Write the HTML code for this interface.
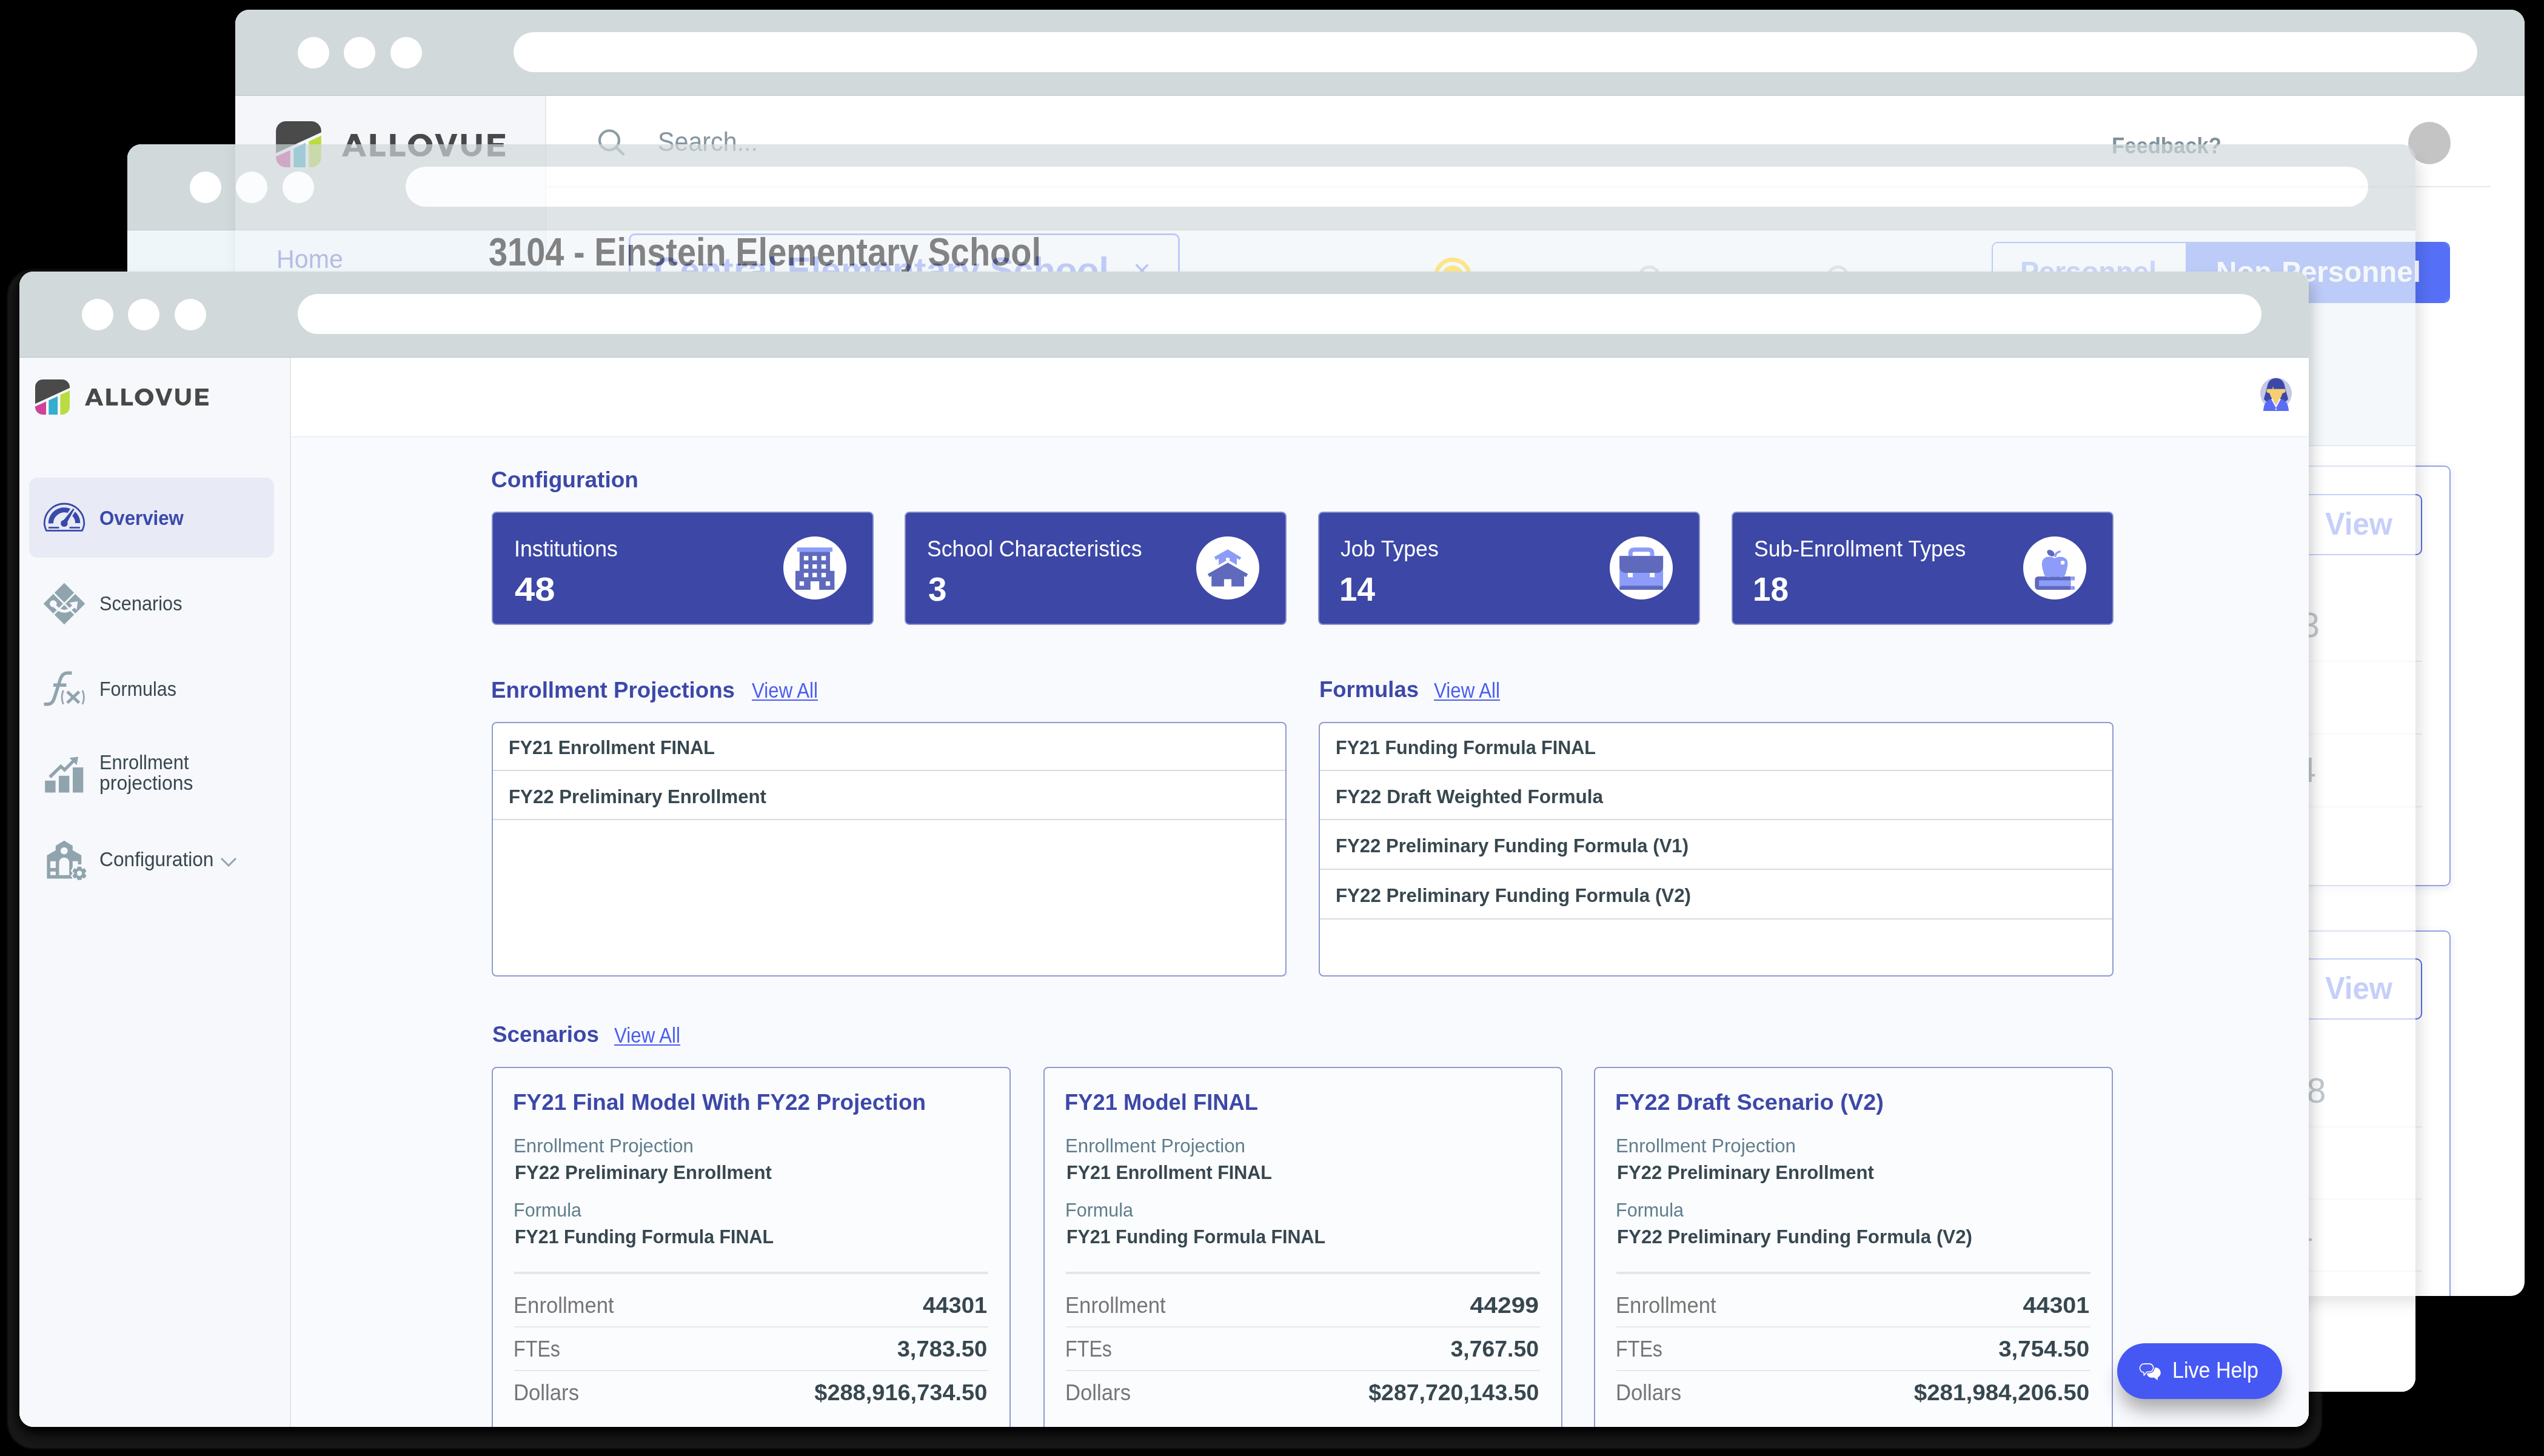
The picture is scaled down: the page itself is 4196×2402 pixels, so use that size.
<!DOCTYPE html><html><head><meta charset="utf-8"><style>
*{margin:0;padding:0;box-sizing:border-box}
html,body{width:4196px;height:2402px;overflow:hidden;background:#000}
body{position:relative;font-family:"Liberation Sans",sans-serif}
.a{position:absolute}
.t{position:absolute;line-height:1;white-space:nowrap}
.win{position:absolute;border-radius:23px;overflow:hidden}
.tb{background:#d1d9db;border-bottom:1px solid #bcc4c8}
.dot{width:52px;height:52px;border-radius:50%;background:#fff}
.url{height:66px;border-radius:33px;background:#fff}
</style></head><body><div class="a" style="left:12px;top:444px;width:3818px;height:1946px;border-radius:44px;background:#181818;filter:blur(1.5px)"></div><div class="a" style="left:30px;top:452px;width:3782px;height:1912px;border-radius:30px;background:#000;filter:blur(9px)"></div><div class="win" style="left:210px;top:238px;width:3774px;height:2058px;background:#fff"><div class="a tb" style="left:0;top:0;width:3774px;height:142px"></div><div class="a dot" style="left:103px;top:44.5px"></div><div class="a dot" style="left:179px;top:44.5px"></div><div class="a dot" style="left:256px;top:44.5px"></div><div class="a url" style="left:459px;top:37px;width:3237px"></div><div class="a" style="left:0.0px;top:142.0px;width:3774.0px;height:355.5px;background:#eff6f9;border-bottom:2px solid #d4e2f2"></div><div class="a" style="left:0.0px;top:497.5px;width:3774.0px;height:1560.5px;background:#fff"></div></div><div class="win" style="left:388px;top:16px;width:3776px;height:2122px;background:#fff;box-shadow:6px 12px 22px rgba(0,0,0,.3)"><div class="a tb" style="left:0;top:0;width:3776px;height:142px"></div><div class="a dot" style="left:103px;top:44.5px"></div><div class="a dot" style="left:179px;top:44.5px"></div><div class="a dot" style="left:256px;top:44.5px"></div><div class="a url" style="left:459px;top:37px;width:3239px"></div><div class="a" style="left:0.0px;top:142.0px;width:513.0px;height:2122.0px;background:#f4f6f9;border-right:2px solid #e6e9ed"></div><div class="a" style="left:513.0px;top:291.0px;width:3207.0px;height:2.0px;background:#e6e9ec"></div><svg class="a" style="left:67.0px;top:184.0px;" width="75" height="76" viewBox="0 0 57 58"><defs><clipPath id="lcb"><rect x="0" y="0" width="57" height="58" rx="12.5"/></clipPath></defs><g clip-path="url(#lcb)"><polygon points="-1,-1 58,-1 58,13.6 -1,40.6" fill="#4a4a4a"/><polygon points="-1,44.9 18,36.4 18,59 -1,59" fill="#d04399"/><polygon points="22.3,34.4 37.1,27.7 37.1,59 22.3,59" fill="#35adcc"/><polygon points="41.4,25.3 58,17.8 58,59 41.4,59" fill="#b9dc42"/></g></svg><svg class="a" style="left:176.0px;top:204.5px;" width="269" height="37.1" viewBox="0 0 203.9 28.1"><path fill="#484848" fill-rule="evenodd" d="M0,28.1 L11.3,0 L19,0 L30.3,28.1 L23.3,28.1 L21.1,22.2 L9.2,22.2 L7,28.1 Z M10.9,17.2 L19.2,17.2 L15,7.3 Z M35.3,0 L42.4,0 L42.4,22.2 L54.3,22.2 L54.3,28.1 L35.3,28.1 Z M60.2,0 L67,0 L67,22.2 L79.2,22.2 L79.2,28.1 L60.2,28.1 Z M82.5,14 A15.3,14.3 0 1 0 113.1,14 A15.3,14.3 0 1 0 82.5,14 Z M89.9,14 A7.9,8.5 0 1 1 105.7,14 A7.9,8.5 0 1 1 89.9,14 Z M116.2,0 L123,0 L130.4,20.4 L137.5,0 L144.3,0 L134,28.1 L126.5,28.1 Z M149.2,0 H155.8 V16.2 A6,6.5 0 0 0 167.8,16.2 V0 H174.6 V16.2 A12.7,11.9 0 0 1 149.2,16.2 Z M182.2,0 L203.9,0 L203.9,5.5 L189,5.5 L189,11.4 L202.1,11.4 L202.1,16.3 L189,16.3 L189,22.2 L203.9,22.2 L203.9,28.1 L182.2,28.1 Z"/></svg><svg class="a" style="left:598.0px;top:197.0px;" width="48" height="48" viewBox="0 0 48 48"><circle cx="19" cy="18.5" r="16" fill="none" stroke="#8d9ca4" stroke-width="4.2"/><path d="M30.5,30 L42,41.5" stroke="#8d9ca4" stroke-width="4.5" stroke-linecap="round"/></svg><div class="t" style="left:697.0px;top:195.8px;font-size:44.6px;color:#8596a0;font-weight:400;transform-origin:0 50%;transform:scaleX(0.9245);">Search...</div><div class="t" style="left:3095.0px;top:205.7px;font-size:37px;color:#7f919a;font-weight:700;transform-origin:0 50%;transform:scaleX(0.9364);">Feedback?</div><div class="a" style="left:3584.0px;top:185.0px;width:70.0px;height:70.0px;background:#c4c4c4;border-radius:50%"></div><div class="t" style="left:68.0px;top:391.4px;font-size:42px;color:#3f45b5;font-weight:400;transform-origin:0 50%;transform:scaleX(0.9817);">Home</div><div class="a" style="left:649.0px;top:369.0px;width:909.0px;height:140.0px;border:3px solid #5a70f5;border-radius:10px"></div><div class="t" style="left:691.0px;top:399.9px;font-size:58px;color:#5a70f0;font-weight:700;transform-origin:0 50%;transform:scaleX(1.0161);">Central Elementary School</div><div class="t" style="left:1481.0px;top:404.7px;font-size:50px;color:#4a63f0;font-weight:400;transform-origin:0 50%;">×</div><div class="a" style="left:2897.0px;top:383.0px;width:756.0px;height:101.0px;border:2px solid #5570f7;border-radius:10px;overflow:hidden"><div class="a" style="left:318.0px;top:0.0px;width:438.0px;height:101.0px;background:#5570f7"></div></div><div class="t" style="left:2944.0px;top:408.9px;font-size:48px;color:#7d90f7;font-weight:700;transform-origin:0 50%;transform:scaleX(0.9695);">Personnel</div><div class="t" style="left:3266.6px;top:408.9px;font-size:48px;color:#fff;font-weight:700;transform-origin:0 50%;transform:scaleX(0.9901);">Non-Personnel</div><div class="a" style="left:2912.0px;top:752.0px;width:741.5px;height:694.0px;border:2px solid #95a2e2;border-radius:10px;box-shadow:0 4px 14px rgba(60,70,120,.12)"></div><div class="a" style="left:3312.0px;top:799.0px;width:295.0px;height:101.0px;border:2px solid #4f6af0;border-radius:10px"></div><div class="t" style="left:3447.0px;top:821.5px;font-size:52px;color:#4f6af0;font-weight:700;transform-origin:0 50%;transform:scaleX(0.9442);">View</div><div class="a" style="left:2912.0px;top:1519.0px;width:741.5px;height:865.0px;border:2px solid #95a2e2;border-radius:10px;box-shadow:0 4px 14px rgba(60,70,120,.12)"></div><div class="a" style="left:3312.0px;top:1565.0px;width:295.0px;height:101.0px;border:2px solid #4f6af0;border-radius:10px"></div><div class="t" style="left:3447.0px;top:1587.5px;font-size:52px;color:#4f6af0;font-weight:700;transform-origin:0 50%;transform:scaleX(0.9442);">View</div><div class="a" style="left:2942.0px;top:1074.0px;width:665.0px;height:2.0px;background:#eceef1"></div><div class="a" style="left:2942.0px;top:1194.0px;width:665.0px;height:2.0px;background:#eceef1"></div><div class="a" style="left:2942.0px;top:1314.0px;width:665.0px;height:2.0px;background:#eceef1"></div><div class="a" style="left:2942.0px;top:1842.0px;width:665.0px;height:2.0px;background:#eceef1"></div><div class="a" style="left:2942.0px;top:1961.0px;width:665.0px;height:2.0px;background:#eceef1"></div><div class="a" style="left:2942.0px;top:2080.0px;width:665.0px;height:2.0px;background:#eceef1"></div></div><div class="win" style="left:210px;top:238px;width:3774px;height:2058px;opacity:0.68;box-shadow:10px 22px 22px rgba(0,0,0,.16)"><div class="a tb" style="left:0;top:0;width:3774px;height:142px"></div><div class="a dot" style="left:103px;top:44.5px"></div><div class="a dot" style="left:179px;top:44.5px"></div><div class="a dot" style="left:256px;top:44.5px"></div><div class="a url" style="left:459px;top:37px;width:3237px"></div><div class="a" style="left:0.0px;top:142.0px;width:3774.0px;height:355.5px;background:#eff6f9;border-bottom:2px solid #d4e2f2"></div><div class="a" style="left:0.0px;top:497.5px;width:3774.0px;height:1560.5px;background:#fff"></div><div class="t" style="left:596.0px;top:145.8px;font-size:64px;color:#4a4a4a;font-weight:700;transform-origin:0 50%;transform:scaleX(0.8741);">3104 - Einstein Elementary School</div><div class="a" style="left:2155.4px;top:187.4px;width:61.2px;height:61.2px;border:7px solid #fcda53;border-radius:50%;background:radial-gradient(circle,#fcda53 17.5px,transparent 18.5px)"></div><div class="a" style="left:2491.5px;top:199.8px;width:37.0px;height:37.0px;border:5px solid #d6d6d6;border-radius:50%"></div><div class="a" style="left:2803.0px;top:199.8px;width:37.0px;height:37.0px;border:5px solid #d6d6d6;border-radius:50%"></div><div class="t" style="right:158.0px;top:765.4px;font-size:57px;color:#a2afb6;font-weight:400;transform-origin:100% 50%;">3</div><div class="t" style="right:164.0px;top:1003.7px;font-size:57px;color:#a2afb6;font-weight:400;transform-origin:100% 50%;">4</div><div class="t" style="right:147.5px;top:1533.0px;font-size:57px;color:#a2afb6;font-weight:400;transform-origin:100% 50%;">8</div><div class="a" style="left:3596.0px;top:1805.0px;width:7.0px;height:4.0px;background:#a2afb6"></div></div><div class="win" style="left:32px;top:448px;width:3776px;height:1906px;background:#f9fafd;box-shadow:8px 12px 20px rgba(0,0,0,.17)"><div class="a tb" style="left:0;top:0;width:3776px;height:142px"></div><div class="a dot" style="left:103px;top:44.5px"></div><div class="a dot" style="left:179px;top:44.5px"></div><div class="a dot" style="left:256px;top:44.5px"></div><div class="a url" style="left:459px;top:37px;width:3239px"></div><div class="a" style="left:0.0px;top:142.0px;width:448.0px;height:1906.0px;background:#f7f8fb;border-right:2px solid #e3e6ea"></div><div class="a" style="left:448.0px;top:142.0px;width:3776.0px;height:132.0px;background:#fff;border-bottom:2px solid #e4e6ee"></div><div class="a" style="left:448.0px;top:273.0px;width:3776.0px;height:1906.0px;background:#f9fafd"></div><svg class="a" style="left:3668.0px;top:152.0px;" width="110" height="100" viewBox="0 0 110 100"><circle cx="54" cy="49" r="26" fill="#c5c9e6"/><path d="M39,40 Q41,24 54,24 Q67,24 69,40 L74,58 Q72,62 66,64 L42,64 Q36,62 34,58 Z" fill="#3c48a8"/><path d="M40,41.8 H68.5 Q70.8,44.5 68.6,47.4 Q66.5,48.3 64.8,48.6 Q61,60 54,66.8 Q47,60 43.2,48.6 Q41.5,48.3 39.4,47.4 Q37.2,44.5 40,41.8 Z" fill="#f5cf72"/><path d="M48.2,42 L48.6,38 L49.4,38 L50,42 Z" fill="#f5cf72"/><path d="M33,78 Q34,60 47,58 L54,69 L61,58 Q74,60 75,78 Z" fill="#5b6cf5"/><path d="M47,58 L54,71 L61,58" fill="none" stroke="#fff" stroke-width="1.8"/><circle cx="54" cy="75" r="1.2" fill="#fff"/></svg><svg class="a" style="left:26.0px;top:178.0px;" width="57" height="58" viewBox="0 0 57 58"><defs><clipPath id="lcf"><rect x="0" y="0" width="57" height="58" rx="12.5"/></clipPath></defs><g clip-path="url(#lcf)"><polygon points="-1,-1 58,-1 58,13.6 -1,40.6" fill="#4a4a4a"/><polygon points="-1,44.9 18,36.4 18,59 -1,59" fill="#d04399"/><polygon points="22.3,34.4 37.1,27.7 37.1,59 22.3,59" fill="#35adcc"/><polygon points="41.4,25.3 58,17.8 58,59 41.4,59" fill="#b9dc42"/></g></svg><svg class="a" style="left:107.9px;top:192.8px;" width="203.9" height="28.1" viewBox="0 0 203.9 28.1"><path fill="#484848" fill-rule="evenodd" d="M0,28.1 L11.3,0 L19,0 L30.3,28.1 L23.3,28.1 L21.1,22.2 L9.2,22.2 L7,28.1 Z M10.9,17.2 L19.2,17.2 L15,7.3 Z M35.3,0 L42.4,0 L42.4,22.2 L54.3,22.2 L54.3,28.1 L35.3,28.1 Z M60.2,0 L67,0 L67,22.2 L79.2,22.2 L79.2,28.1 L60.2,28.1 Z M82.5,14 A15.3,14.3 0 1 0 113.1,14 A15.3,14.3 0 1 0 82.5,14 Z M89.9,14 A7.9,8.5 0 1 1 105.7,14 A7.9,8.5 0 1 1 89.9,14 Z M116.2,0 L123,0 L130.4,20.4 L137.5,0 L144.3,0 L134,28.1 L126.5,28.1 Z M149.2,0 H155.8 V16.2 A6,6.5 0 0 0 167.8,16.2 V0 H174.6 V16.2 A12.7,11.9 0 0 1 149.2,16.2 Z M182.2,0 L203.9,0 L203.9,5.5 L189,5.5 L189,11.4 L202.1,11.4 L202.1,16.3 L189,16.3 L189,22.2 L203.9,22.2 L203.9,28.1 L182.2,28.1 Z"/></svg><div class="a" style="left:16.0px;top:340.0px;width:404.0px;height:132.0px;background:#e8eaf6;border-radius:14px"></div><svg class="a" style="left:28.0px;top:367.0px;" width="90" height="75" viewBox="0 0 90 75"><path d="M16.5,60.4 L75.5,60.4 Q78.8,53 78.8,48 A32.8,32 0 0 0 13.2,48 Q13.2,53 16.5,60.4 Z" fill="none" stroke="#3949ab" stroke-width="2.8" stroke-linejoin="round"/><path d="M19.7,48.6 A26.3,26.3 0 0 1 56.2,24.2 L51.5,31.2 A18.1,18.1 0 0 0 27.9,48.6 Z" fill="#3949ab"/><path d="M63.9,29.1 A26.3,26.3 0 0 1 72.3,48 L64.1,48 A18.1,18.1 0 0 0 59.3,36 Z" fill="#3949ab"/><circle cx="45.9" cy="48.4" r="5.7" fill="#3949ab"/><path d="M42.5,46 L60.8,23.8 L62.6,25.2 L49.5,49 Z" fill="#3949ab"/><rect x="20" y="54.1" width="17.4" height="2.7" fill="#3949ab"/><rect x="54.6" y="54.1" width="17.3" height="2.7" fill="#3949ab"/></svg><div class="t" style="left:132.0px;top:390.7px;font-size:32.3px;color:#3949ab;font-weight:700;transform-origin:0 50%;transform:scaleX(0.9663);">Overview</div><svg class="a" style="left:28.0px;top:502.0px;" width="90" height="90" viewBox="0 0 90 90"><polygon points="46,11.7 80.3,46 46,80.3 11.7,46" fill="#90a4ae"/><path d="M28.5,28.5 L63.5,63.5 M63.5,28.5 L28.5,63.5" stroke="#f7f8fb" stroke-width="2.8"/><circle cx="27.8" cy="46" r="5.8" fill="#f7f8fb"/><path d="M30,49.5 Q46,67 61.5,50" fill="none" stroke="#f7f8fb" stroke-width="5"/><polygon points="68.3,42 54.4,44.2 60.5,50.2 66.4,55.9" fill="#f7f8fb"/></svg><div class="t" style="left:132.0px;top:531.5px;font-size:32.3px;color:#37474f;font-weight:400;transform-origin:0 50%;transform:scaleX(0.9504);">Scenarios</div><svg class="a" style="left:28.0px;top:647.0px;" width="90" height="80" viewBox="0 0 90 80"><path d="M12.5,66.8 L18.5,66.8 Q26.5,66.8 29.5,57 L39.5,25.5 Q43,15.2 51,15.2 L58.5,15.2" fill="none" stroke="#90a4ae" stroke-width="5.5"/><path d="M28,35.2 L49.5,35.2" stroke="#90a4ae" stroke-width="5.5"/><path d="M44.5,44 Q39.5,55.4 44.5,66.8 M76,44 Q81,55.4 76,66.8" fill="none" stroke="#90a4ae" stroke-width="2.8"/><path d="M51,46 L70.5,64.5 M70.5,46 L51,64.5" stroke="#90a4ae" stroke-width="5"/></svg><div class="t" style="left:132.0px;top:673.2px;font-size:32.3px;color:#37474f;font-weight:400;transform-origin:0 50%;transform:scaleX(0.9435);">Formulas</div><svg class="a" style="left:28.0px;top:787.0px;" width="90" height="85" viewBox="0 0 90 85"><rect x="14.2" y="52.8" width="17.4" height="19.7" fill="#90a4ae"/><rect x="37" y="44.8" width="17.4" height="27.7" fill="#90a4ae"/><rect x="60" y="31" width="17.3" height="41.5" fill="#90a4ae"/><path d="M22.2,47 L40.3,29.3 L46.5,35 L62.5,19" fill="none" stroke="#90a4ae" stroke-width="5.3"/><polygon points="54.5,15.3 69,13.6 66.5,27.2" fill="#90a4ae"/></svg><div class="t" style="left:132.0px;top:794.1px;font-size:32.3px;color:#37474f;font-weight:400;transform-origin:0 50%;transform:scaleX(0.9555);">Enrollment</div><div class="t" style="left:132.0px;top:827.5px;font-size:32.3px;color:#37474f;font-weight:400;transform-origin:0 50%;transform:scaleX(0.9886);">projections</div><svg class="a" style="left:28.0px;top:927.0px;" width="90" height="85" viewBox="0 0 90 85"><path d="M17.4,36 L31.8,27.7 L31.8,20.3 L45.8,11.7 L59.8,20.3 L59.8,27.7 L74.2,36 L74.2,51 L68.6,51 L68.6,45.8 L59.8,45.8 L59.8,56 L56.7,61.8 L59.8,65.5 L56.7,69.8 L59.8,74.4 L17.4,74.4 Z" fill="#90a4ae"/><circle cx="45.8" cy="28.6" r="5.9" fill="#f7f8fb"/><path d="M37.5,68.7 L37.5,48 A8.3,8.3 0 0 1 54.2,48 L54.2,68.7 Z" fill="#f7f8fb"/><rect x="23" y="45.8" width="8.9" height="11.2" fill="#f7f8fb"/><rect x="23" y="62.8" width="8.9" height="5.9" fill="#f7f8fb"/><g transform="translate(71,65.7)"><path d="M-3,-11 L3,-11 L4.5,-7 L8.5,-8.5 L11.5,-3.5 L8.5,0 L11.5,4 L8.5,8.5 L4.5,7 L3,11 L-3,11 L-4.5,7 L-8.5,8.5 L-11.5,4 L-8.5,0 L-11.5,-3.5 L-8.5,-8.5 L-4.5,-7 Z" fill="#90a4ae"/><circle r="4.2" fill="#f7f8fb"/></g></svg><div class="t" style="left:132.0px;top:953.7px;font-size:32.3px;color:#37474f;font-weight:400;transform-origin:0 50%;transform:scaleX(0.9811);">Configuration</div><svg class="a" style="left:331.0px;top:965.0px;" width="28" height="18" viewBox="0 0 28 18"><path d="M2,3 L14,15 L26,3" fill="none" stroke="#90a4ae" stroke-width="3"/></svg><div class="t" style="left:778.0px;top:324.8px;font-size:37.4px;color:#3c48a8;font-weight:700;transform-origin:0 50%;transform:scaleX(0.9915);">Configuration</div><div class="a" style="left:779.0px;top:396.0px;width:630.0px;height:187.0px;background:#3c47a6;border:2px solid #8a90cc;border-radius:8px"></div><div class="t" style="left:815.5px;top:438.5px;font-size:37.2px;color:#fff;font-weight:400;transform-origin:0 50%;transform:scaleX(0.9619);">Institutions</div><div class="t" style="left:816.5px;top:496.8px;font-size:55.7px;color:#fff;font-weight:700;transform-origin:0 50%;transform:scaleX(1.0734);">48</div><div class="a" style="left:1260.0px;top:437.0px;width:104.0px;height:104.0px;background:#fff;border-radius:50%"></div><svg class="a" style="left:1260.0px;top:437.0px;" width="104" height="104" viewBox="0 0 104 104"><rect x="22.8" y="18.2" width="58.2" height="7" fill="#8c9cf8"/><path d="M26.8,25.2 H77 V56.7 H84.4 V88 H59.2 V74.1 H44.8 V88 H19.9 V56.7 H26.8 Z" fill="#5f6abd"/><rect x="33.9" y="32.2" width="7.4" height="7.2" fill="#fff"/><rect x="48" y="32.2" width="7.4" height="7.2" fill="#fff"/><rect x="62.8" y="32.2" width="7.4" height="7.2" fill="#fff"/><rect x="33.9" y="46" width="7.4" height="7.2" fill="#fff"/><rect x="48" y="46" width="7.4" height="7.2" fill="#fff"/><rect x="62.8" y="46" width="7.4" height="7.2" fill="#fff"/><rect x="33.9" y="60.1" width="7.4" height="7.2" fill="#fff"/><rect x="48" y="60.1" width="7.4" height="7.2" fill="#fff"/><rect x="62.8" y="60.1" width="7.4" height="7.2" fill="#fff"/><rect x="26.8" y="74.1" width="7.3" height="7.2" fill="#fff"/><rect x="69.9" y="74.1" width="7.2" height="7.2" fill="#fff"/></svg><div class="a" style="left:1460.0px;top:396.0px;width:630.0px;height:187.0px;background:#3c47a6;border:2px solid #8a90cc;border-radius:8px"></div><div class="t" style="left:1496.5px;top:438.5px;font-size:37.2px;color:#fff;font-weight:400;transform-origin:0 50%;transform:scaleX(0.9582);">School Characteristics</div><div class="t" style="left:1498.5px;top:496.8px;font-size:55.7px;color:#fff;font-weight:700;transform-origin:0 50%;transform:scaleX(0.9844);">3</div><div class="a" style="left:1941.0px;top:437.0px;width:104.0px;height:104.0px;background:#fff;border-radius:50%"></div><svg class="a" style="left:1941.0px;top:437.0px;" width="104" height="104" viewBox="0 0 104 104"><path d="M29.8,33.7 L52.1,21.3 L74.1,34.4 L71.9,38.7 L67,36 L67,46.9 L52.1,38.4 L37.1,46.9 L37.1,36.2 L32.4,38.9 Z" fill="#8c9cf8"/><rect x="49.1" y="35.3" width="6" height="4.6" fill="#fff"/><path d="M18.8,62.1 L52.1,43.3 L85.3,62.1 L82.3,67 L79,65.2 L79,82.5 L58.1,82.5 L58.1,70.4 L45.9,70.4 L45.9,82.5 L25.2,82.5 L25.2,65.2 L21.9,67 Z" fill="#5f6abd"/></svg><div class="a" style="left:2142.0px;top:396.0px;width:630.0px;height:187.0px;background:#3c47a6;border:2px solid #8a90cc;border-radius:8px"></div><div class="t" style="left:2178.5px;top:438.5px;font-size:37.2px;color:#fff;font-weight:400;transform-origin:0 50%;transform:scaleX(0.9577);">Job Types</div><div class="t" style="left:2176.5px;top:496.8px;font-size:55.7px;color:#fff;font-weight:700;transform-origin:0 50%;transform:scaleX(0.9523);">14</div><div class="a" style="left:2623.0px;top:437.0px;width:104.0px;height:104.0px;background:#fff;border-radius:50%"></div><svg class="a" style="left:2623.0px;top:437.0px;" width="104" height="104" viewBox="0 0 104 104"><path d="M34.3,32.2 V27 Q34.3,21.7 41,21.7 H63 Q70,21.7 70,27 V32.2" fill="none" stroke="#8c9cf8" stroke-width="7"/><rect x="16.2" y="32.2" width="71.9" height="55.8" fill="#8c9cf8"/><path d="M16.2,32.2 H88.1 V49 Q88.1,60.1 77,60.1 H27.3 Q16.2,60.1 16.2,49 Z" fill="#5f6abd"/><rect x="30" y="60.1" width="8.1" height="7.2" fill="#fff"/><rect x="66.2" y="60.1" width="7.9" height="7.2" fill="#fff"/><path d="M16.2,88 V86 Q16.2,81.3 21,81.3 H83.3 Q88.1,81.3 88.1,86 V88 Z" fill="#5f6abd"/></svg><div class="a" style="left:2824.0px;top:396.0px;width:630.0px;height:187.0px;background:#3c47a6;border:2px solid #8a90cc;border-radius:8px"></div><div class="t" style="left:2860.5px;top:438.5px;font-size:37.2px;color:#fff;font-weight:400;transform-origin:0 50%;transform:scaleX(0.9568);">Sub-Enrollment Types</div><div class="t" style="left:2859.0px;top:496.8px;font-size:55.7px;color:#fff;font-weight:700;transform-origin:0 50%;transform:scaleX(0.9523);">18</div><div class="a" style="left:3305.0px;top:437.0px;width:104.0px;height:104.0px;background:#fff;border-radius:50%"></div><svg class="a" style="left:3305.0px;top:437.0px;" width="104" height="104" viewBox="0 0 104 104"><path d="M19.3,72.1 Q19.3,66.1 25.3,66.1 H78.3 V88 H25.3 Q19.3,88 19.3,82 Z" fill="#5f6abd"/><rect x="26" y="72.4" width="52.3" height="9.5" fill="#8c9cf8"/><rect x="78.3" y="66.1" width="6.7" height="6.3" fill="#8c9cf8"/><rect x="78.3" y="81.9" width="6.7" height="6.1" fill="#8c9cf8"/><path d="M52.1,36 Q58,32.5 66,34 Q74,37 73.4,46 Q73,51 70,61 Q68.5,67 62.5,67.5 Q57,66 52.1,67 Q47,66 41.5,67.5 Q35.5,67 34,61 Q31,51 30.9,46 Q30.5,37 38,34 Q46,32.5 52.1,36 Z" fill="#8c9cf8"/><circle cx="65.1" cy="43.3" r="3.3" fill="#fff"/><ellipse cx="45.5" cy="27.5" rx="6.8" ry="4.6" transform="rotate(35 45.5 27.5)" fill="#5f6abd"/><path d="M52.8,34 Q53,26 61.7,24.6" fill="none" stroke="#8c9cf8" stroke-width="3.2"/></svg><div class="t" style="left:778.0px;top:672.0px;font-size:37.4px;color:#3c48a8;font-weight:700;transform-origin:0 50%;transform:scaleX(0.9822);">Enrollment Projections</div><div class="t" style="left:1208.0px;top:673.4px;font-size:35px;color:#4a5cf0;font-weight:400;transform-origin:0 50%;transform:scaleX(0.8940);text-decoration:underline;text-decoration-thickness:2px;text-underline-offset:3px">View All</div><div class="t" style="left:2143.5px;top:671.0px;font-size:37.4px;color:#3c48a8;font-weight:700;transform-origin:0 50%;transform:scaleX(0.9745);">Formulas</div><div class="t" style="left:2333.0px;top:673.4px;font-size:35px;color:#4a5cf0;font-weight:400;transform-origin:0 50%;transform:scaleX(0.8940);text-decoration:underline;text-decoration-thickness:2px;text-underline-offset:3px">View All</div><div class="a" style="left:779.0px;top:743.0px;width:1311.0px;height:420.0px;background:#fff;border:2px solid #8e99cf;border-radius:8px"></div><div class="t" style="left:807.0px;top:770.3px;font-size:31.5px;color:#37474f;font-weight:700;transform-origin:0 50%;transform:scaleX(0.9713);">FY21 Enrollment FINAL</div><div class="a" style="left:781.0px;top:822.0px;width:1307.0px;height:2.0px;background:#d5dde0"></div><div class="t" style="left:807.0px;top:850.6px;font-size:31.5px;color:#37474f;font-weight:700;transform-origin:0 50%;transform:scaleX(0.9909);">FY22 Preliminary Enrollment</div><div class="a" style="left:781.0px;top:903.0px;width:1307.0px;height:2.0px;background:#d5dde0"></div><div class="a" style="left:2143.0px;top:743.0px;width:1311.0px;height:420.0px;background:#fff;border:2px solid #8e99cf;border-radius:8px"></div><div class="t" style="left:2171.0px;top:770.3px;font-size:31.5px;color:#37474f;font-weight:700;transform-origin:0 50%;transform:scaleX(0.9689);">FY21 Funding Formula FINAL</div><div class="a" style="left:2145.0px;top:822.0px;width:1307.0px;height:2.0px;background:#d5dde0"></div><div class="t" style="left:2171.0px;top:850.6px;font-size:31.5px;color:#37474f;font-weight:700;transform-origin:0 50%;transform:scaleX(1.0012);">FY22 Draft Weighted Formula</div><div class="a" style="left:2145.0px;top:903.0px;width:1307.0px;height:2.0px;background:#d5dde0"></div><div class="t" style="left:2171.0px;top:932.3px;font-size:31.5px;color:#37474f;font-weight:700;transform-origin:0 50%;transform:scaleX(0.9867);">FY22 Preliminary Funding Formula (V1)</div><div class="a" style="left:2145.0px;top:985.0px;width:1307.0px;height:2.0px;background:#d5dde0"></div><div class="t" style="left:2171.0px;top:1013.8px;font-size:31.5px;color:#37474f;font-weight:700;transform-origin:0 50%;transform:scaleX(0.9935);">FY22 Preliminary Funding Formula (V2)</div><div class="a" style="left:2145.0px;top:1067.0px;width:1307.0px;height:2.0px;background:#d5dde0"></div><div class="t" style="left:779.5px;top:1240.3px;font-size:37.4px;color:#3c48a8;font-weight:700;transform-origin:0 50%;transform:scaleX(0.9846);">Scenarios</div><div class="t" style="left:981.0px;top:1242.4px;font-size:35px;color:#4a5cf0;font-weight:400;transform-origin:0 50%;transform:scaleX(0.8940);text-decoration:underline;text-decoration-thickness:2px;text-underline-offset:3px">View All</div><div class="a" style="left:779.0px;top:1312.0px;width:856.0px;height:700.0px;background:#fbfcfe;border:2px solid #8e99cf;border-radius:8px"></div><div class="t" style="left:814.0px;top:1352.3px;font-size:37.8px;color:#3c48a8;font-weight:700;transform-origin:0 50%;transform:scaleX(0.9772);">FY21 Final Model With FY22 Projection</div><div class="t" style="left:815.0px;top:1427.3px;font-size:31.8px;color:#607d8b;font-weight:400;transform-origin:0 50%;transform:scaleX(0.9827);">Enrollment Projection</div><div class="t" style="left:817.0px;top:1471.4px;font-size:31.8px;color:#37474f;font-weight:700;transform-origin:0 50%;transform:scaleX(0.9793);">FY22 Preliminary Enrollment</div><div class="t" style="left:815.0px;top:1533.1px;font-size:31.8px;color:#607d8b;font-weight:400;transform-origin:0 50%;transform:scaleX(0.9603);">Formula</div><div class="t" style="left:817.0px;top:1577.1px;font-size:31.8px;color:#37474f;font-weight:700;transform-origin:0 50%;transform:scaleX(0.9554);">FY21 Funding Formula FINAL</div><div class="a" style="left:816.0px;top:1650.0px;width:782.0px;height:4.0px;background:#e4e6eb"></div><div class="t" style="left:815.0px;top:1688.3px;font-size:36px;color:#757575;font-weight:400;transform-origin:0 50%;transform:scaleX(0.9629);">Enrollment</div><div class="t" style="right:2180.0px;top:1688.3px;font-size:36px;color:#37474f;font-weight:700;transform-origin:100% 50%;transform:scaleX(1.0588);">44301</div><div class="a" style="left:816.0px;top:1740.0px;width:782.0px;height:2.0px;background:#e4e7ed"></div><div class="t" style="left:815.0px;top:1760.0px;font-size:36px;color:#757575;font-weight:400;transform-origin:0 50%;transform:scaleX(0.8953);">FTEs</div><div class="t" style="right:2180.0px;top:1760.0px;font-size:36px;color:#37474f;font-weight:700;transform-origin:100% 50%;transform:scaleX(1.0596);">3,783.50</div><div class="a" style="left:816.0px;top:1812.0px;width:782.0px;height:2.0px;background:#e4e7ed"></div><div class="t" style="left:815.0px;top:1831.5px;font-size:36px;color:#757575;font-weight:400;transform-origin:0 50%;transform:scaleX(0.9640);">Dollars</div><div class="t" style="right:2180.0px;top:1831.5px;font-size:36px;color:#37474f;font-weight:700;transform-origin:100% 50%;transform:scaleX(1.0545);">$288,916,734.50</div><div class="a" style="left:1689.0px;top:1312.0px;width:856.0px;height:700.0px;background:#fbfcfe;border:2px solid #8e99cf;border-radius:8px"></div><div class="t" style="left:1724.0px;top:1352.3px;font-size:37.8px;color:#3c48a8;font-weight:700;transform-origin:0 50%;transform:scaleX(0.9614);">FY21 Model FINAL</div><div class="t" style="left:1725.0px;top:1427.3px;font-size:31.8px;color:#607d8b;font-weight:400;transform-origin:0 50%;transform:scaleX(0.9827);">Enrollment Projection</div><div class="t" style="left:1727.0px;top:1471.4px;font-size:31.8px;color:#37474f;font-weight:700;transform-origin:0 50%;transform:scaleX(0.9594);">FY21 Enrollment FINAL</div><div class="t" style="left:1725.0px;top:1533.1px;font-size:31.8px;color:#607d8b;font-weight:400;transform-origin:0 50%;transform:scaleX(0.9603);">Formula</div><div class="t" style="left:1727.0px;top:1577.1px;font-size:31.8px;color:#37474f;font-weight:700;transform-origin:0 50%;transform:scaleX(0.9554);">FY21 Funding Formula FINAL</div><div class="a" style="left:1726.0px;top:1650.0px;width:782.0px;height:4.0px;background:#e4e6eb"></div><div class="t" style="left:1725.0px;top:1688.3px;font-size:36px;color:#757575;font-weight:400;transform-origin:0 50%;transform:scaleX(0.9629);">Enrollment</div><div class="t" style="right:1270.0px;top:1688.3px;font-size:36px;color:#37474f;font-weight:700;transform-origin:100% 50%;transform:scaleX(1.1358);">44299</div><div class="a" style="left:1726.0px;top:1740.0px;width:782.0px;height:2.0px;background:#e4e7ed"></div><div class="t" style="left:1725.0px;top:1760.0px;font-size:36px;color:#757575;font-weight:400;transform-origin:0 50%;transform:scaleX(0.8953);">FTEs</div><div class="t" style="right:1270.0px;top:1760.0px;font-size:36px;color:#37474f;font-weight:700;transform-origin:100% 50%;transform:scaleX(1.0397);">3,767.50</div><div class="a" style="left:1726.0px;top:1812.0px;width:782.0px;height:2.0px;background:#e4e7ed"></div><div class="t" style="left:1725.0px;top:1831.5px;font-size:36px;color:#757575;font-weight:400;transform-origin:0 50%;transform:scaleX(0.9640);">Dollars</div><div class="t" style="right:1270.0px;top:1831.5px;font-size:36px;color:#37474f;font-weight:700;transform-origin:100% 50%;transform:scaleX(1.0397);">$287,720,143.50</div><div class="a" style="left:2597.0px;top:1312.0px;width:856.0px;height:700.0px;background:#fbfcfe;border:2px solid #8e99cf;border-radius:8px"></div><div class="t" style="left:2632.0px;top:1352.3px;font-size:37.8px;color:#3c48a8;font-weight:700;transform-origin:0 50%;transform:scaleX(1.0043);">FY22 Draft Scenario (V2)</div><div class="t" style="left:2633.0px;top:1427.3px;font-size:31.8px;color:#607d8b;font-weight:400;transform-origin:0 50%;transform:scaleX(0.9827);">Enrollment Projection</div><div class="t" style="left:2635.0px;top:1471.4px;font-size:31.8px;color:#37474f;font-weight:700;transform-origin:0 50%;transform:scaleX(0.9793);">FY22 Preliminary Enrollment</div><div class="t" style="left:2633.0px;top:1533.1px;font-size:31.8px;color:#607d8b;font-weight:400;transform-origin:0 50%;transform:scaleX(0.9603);">Formula</div><div class="t" style="left:2635.0px;top:1577.1px;font-size:31.8px;color:#37474f;font-weight:700;transform-origin:0 50%;transform:scaleX(0.9842);">FY22 Preliminary Funding Formula (V2)</div><div class="a" style="left:2634.0px;top:1650.0px;width:782.0px;height:4.0px;background:#e4e6eb"></div><div class="t" style="left:2633.0px;top:1688.3px;font-size:36px;color:#757575;font-weight:400;transform-origin:0 50%;transform:scaleX(0.9629);">Enrollment</div><div class="t" style="right:362.0px;top:1688.3px;font-size:36px;color:#37474f;font-weight:700;transform-origin:100% 50%;transform:scaleX(1.0938);">44301</div><div class="a" style="left:2634.0px;top:1740.0px;width:782.0px;height:2.0px;background:#e4e7ed"></div><div class="t" style="left:2633.0px;top:1760.0px;font-size:36px;color:#757575;font-weight:400;transform-origin:0 50%;transform:scaleX(0.8953);">FTEs</div><div class="t" style="right:362.0px;top:1760.0px;font-size:36px;color:#37474f;font-weight:700;transform-origin:100% 50%;transform:scaleX(1.0704);">3,754.50</div><div class="a" style="left:2634.0px;top:1812.0px;width:782.0px;height:2.0px;background:#e4e7ed"></div><div class="t" style="left:2633.0px;top:1831.5px;font-size:36px;color:#757575;font-weight:400;transform-origin:0 50%;transform:scaleX(0.9640);">Dollars</div><div class="t" style="right:362.0px;top:1831.5px;font-size:36px;color:#37474f;font-weight:700;transform-origin:100% 50%;transform:scaleX(1.0715);">$281,984,206.50</div><div class="a" style="left:3460.0px;top:1768.0px;width:272.0px;height:92.0px;background:#4658f4;border-radius:46px;box-shadow:0 22px 30px -4px rgba(0,0,0,.32)"></div><svg class="a" style="left:3488.0px;top:1787.0px;" width="60" height="55" viewBox="0 0 60 55"><path d="M27,21.2 H36 A7.8,8.3 0 0 1 43.8,29.5 A7.8,8.3 0 0 1 39.1,37 L38.7,41.9 L33.2,37.8 H28 A7.8,8.3 0 0 1 20.6,29.5 A7.8,8.3 0 0 1 27,21.2 Z" fill="#fff"/><path d="M17.3,14.9 H25 A6.6,6.6 0 0 1 25,28.2 H21 L16.2,34 L16,29.2 A7,6.9 0 0 1 17.3,14.9 Z" fill="#4a5af3" stroke="#4a5af3" stroke-width="4.5" stroke-linejoin="round"/><path d="M17.3,14.9 H25 A6.6,6.6 0 0 1 25,28.2 H21 L16.2,34 L16,29.2 A7,6.9 0 0 1 17.3,14.9 Z" fill="#4a5af3" stroke="#fff" stroke-width="1.6" stroke-linejoin="round"/></svg><div class="t" style="left:3551.0px;top:1794.8px;font-size:36.8px;color:#fff;font-weight:400;transform-origin:0 50%;transform:scaleX(0.9256);">Live Help</div></div></body></html>
